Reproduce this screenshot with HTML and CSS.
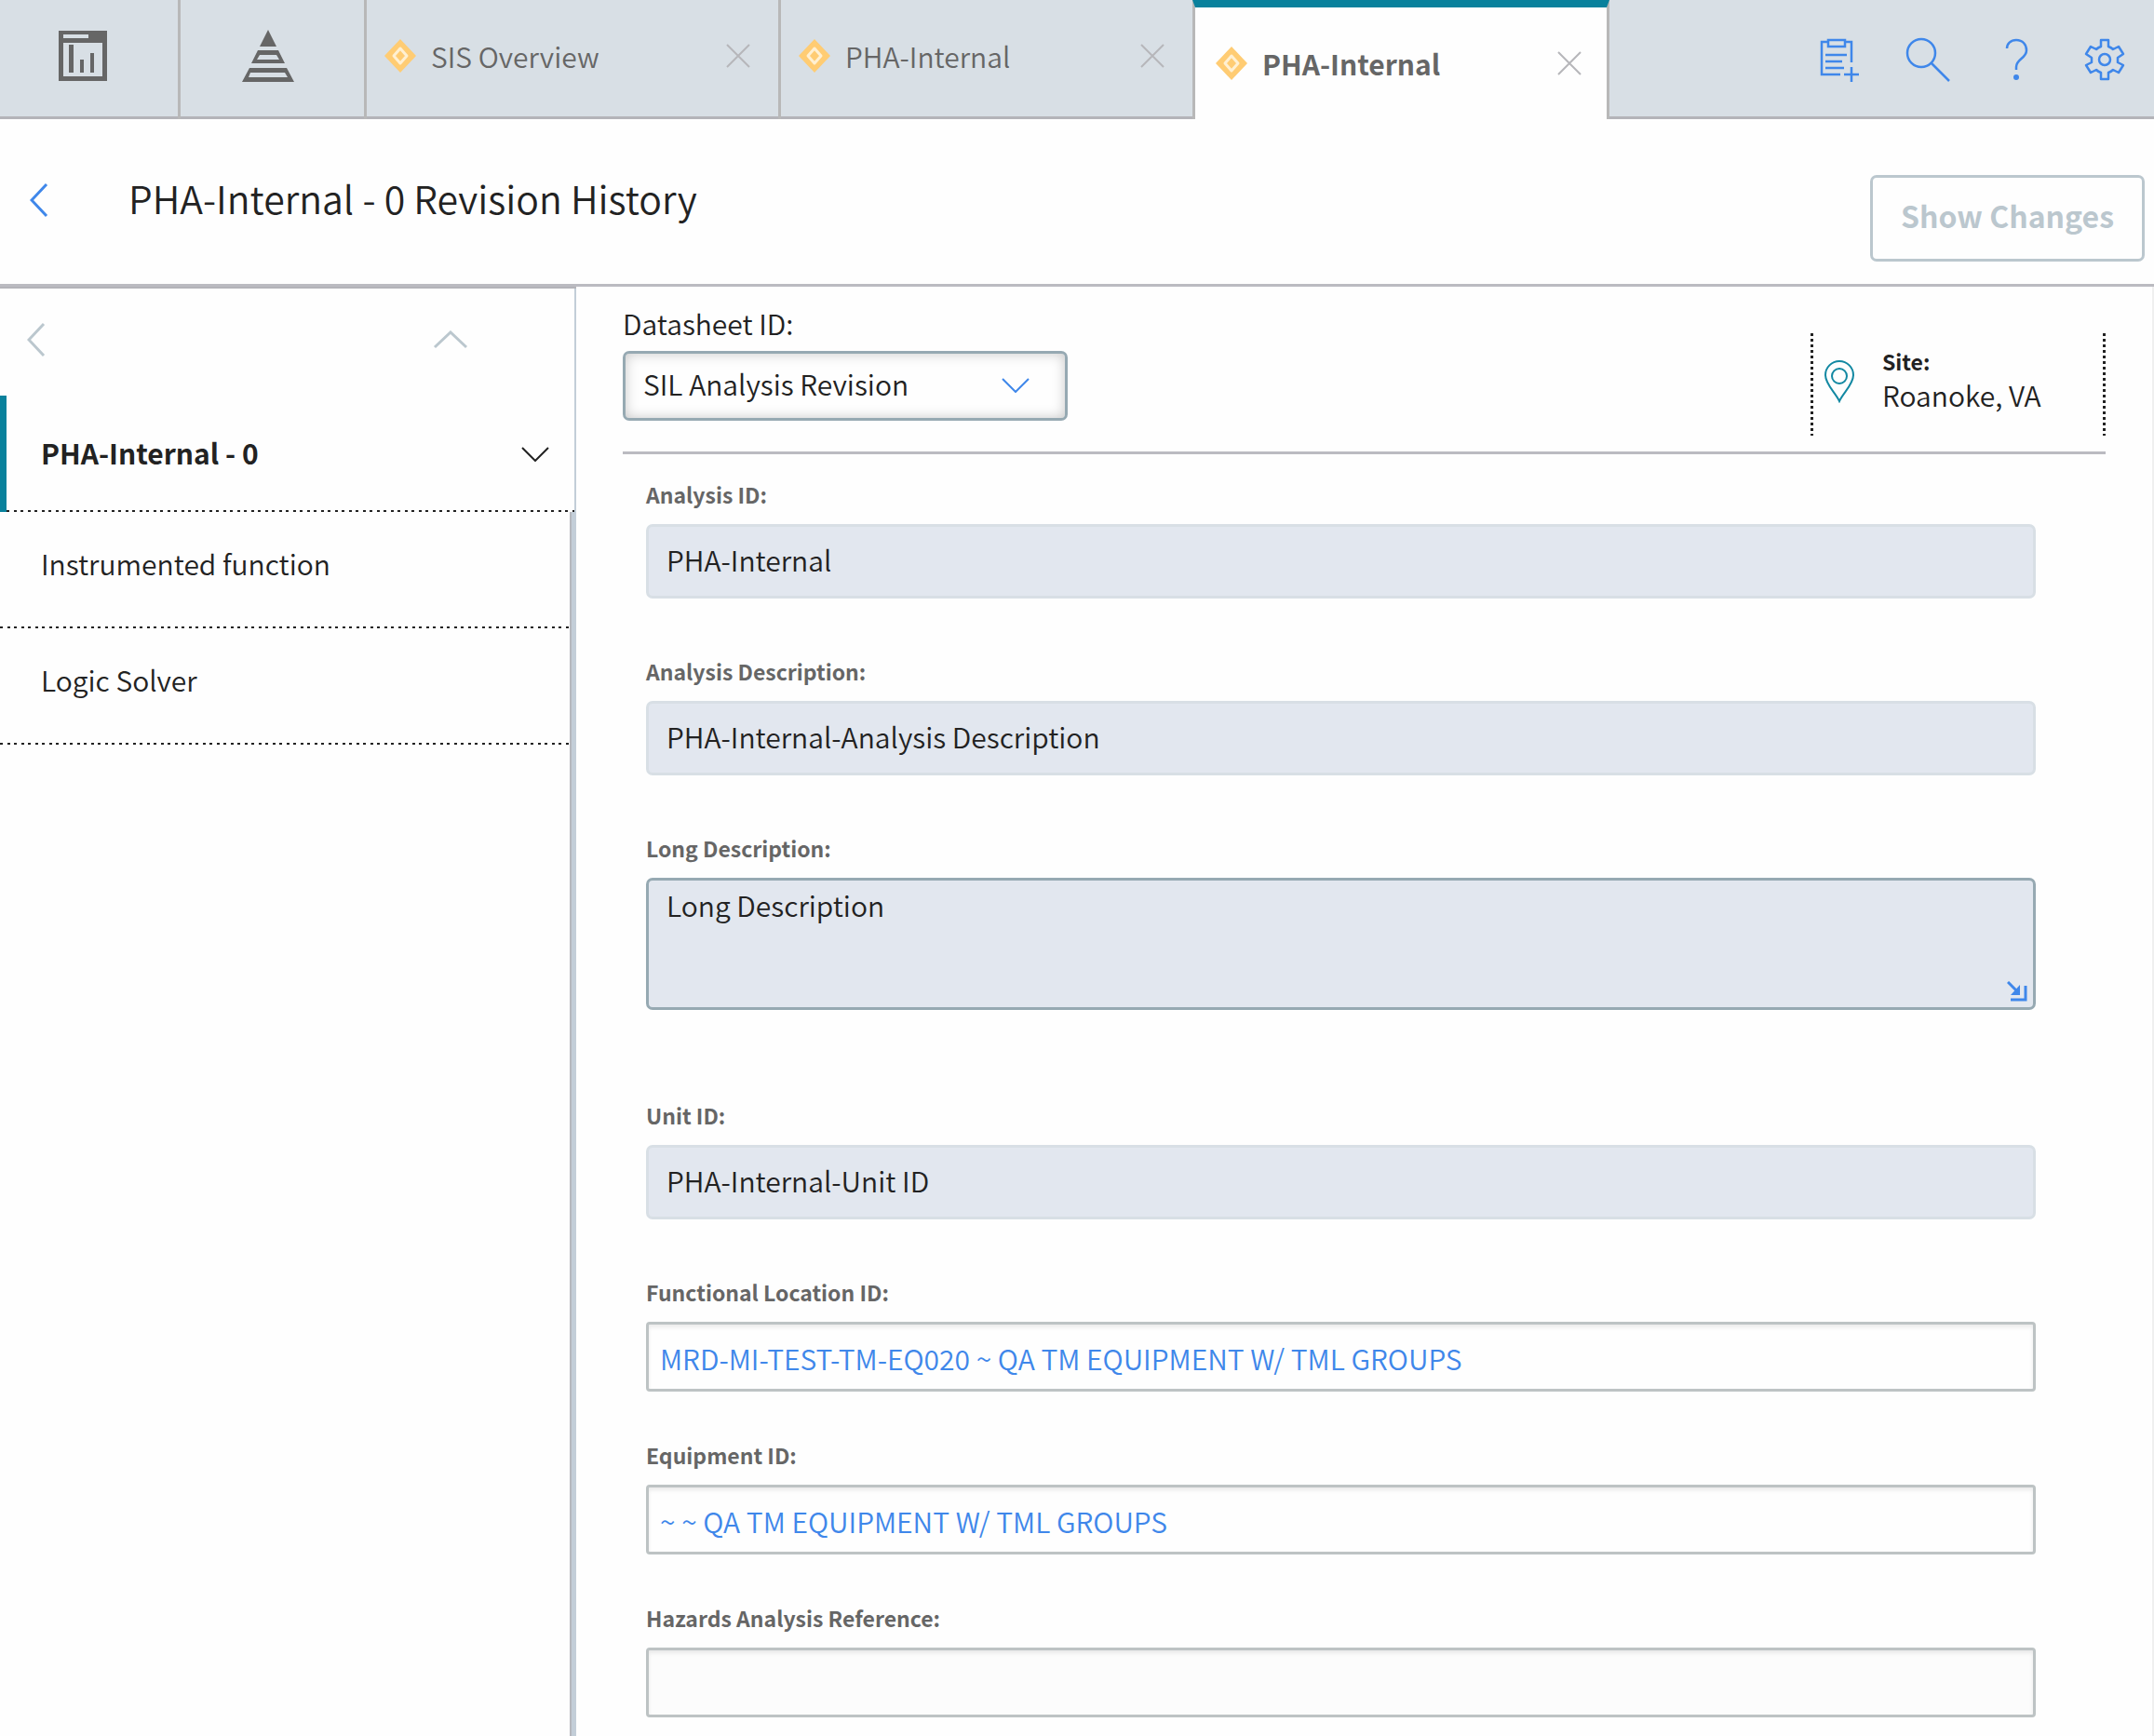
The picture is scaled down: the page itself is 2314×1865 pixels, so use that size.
FILE: index.html
```html
<!DOCTYPE html>
<html lang="en">
<head>
    <meta charset="UTF-8" />
    <meta name="viewport" content="width=device-width, initial-scale=1.0" />
    <title>PHA-Internal - 0 Revision History</title>
    <link rel="stylesheet" href="styles.css">
</head>
<body>
    <header class="topbar">
        <button class="nav-icon" aria-label="Dashboard">
            <svg width="52" height="54" viewBox="0 0 52 54">
                <path fill="#666" fill-rule="evenodd" d="M0 0H52V54H0ZM5 4V8H32V4ZM5 13V49H47V13Z" />
                <path fill="#666" d="M11 15h5v30h-5zM23 31h4v14h-4zM34 24h4v21h-4z" />
            </svg>
        </button>
        <button class="nav-icon nav-icon-wide" aria-label="Hierarchy">
            <svg width="56" height="56" viewBox="0 0 56 56">
                <path fill="#666" fill-rule="evenodd" d="M28 0L37 18H19ZM17 22H39L46 36H10ZM19 27L16 32H40L37 27ZM8 41H48L56 56H0ZM9 46L7 51H49L46 46Z" />
            </svg>
        </button>

        <div class="tab">
            <svg class="tab-mark" width="34" height="36" viewBox="0 0 34 36">
                <path fill="#ffcc73" d="M17 0L34 18L17 36L0 18Z" />
                <path fill="none" stroke="#fff0d2" stroke-width="3" stroke-linejoin="round" d="M17 10L24 18L17 26L10 18Z" />
            </svg>
            <a href="#" class="tab-name">SIS Overview</a>
            <button class="tab-close" aria-label="Close SIS Overview">
                <svg width="26" height="26" viewBox="0 0 26 26"><path d="M1 1L25 25M25 1L1 25" /></svg>
            </button>
        </div>
        <div class="tab">
            <svg class="tab-mark" width="34" height="36" viewBox="0 0 34 36">
                <path fill="#ffcc73" d="M17 0L34 18L17 36L0 18Z" />
                <path fill="none" stroke="#fff0d2" stroke-width="3" stroke-linejoin="round" d="M17 10L24 18L17 26L10 18Z" />
            </svg>
            <a href="#" class="tab-name">PHA-Internal</a>
            <button class="tab-close" aria-label="Close PHA-Internal">
                <svg width="26" height="26" viewBox="0 0 26 26"><path d="M1 1L25 25M25 1L1 25" /></svg>
            </button>
        </div>
        <div class="tab active">
            <svg class="tab-mark" width="34" height="36" viewBox="0 0 34 36">
                <path fill="#ffcc73" d="M17 0L34 18L17 36L0 18Z" />
                <path fill="none" stroke="#fff0d2" stroke-width="3" stroke-linejoin="round" d="M17 10L24 18L17 26L10 18Z" />
            </svg>
            <a href="#" class="tab-name">PHA-Internal</a>
            <button class="tab-close" aria-label="Close PHA-Internal">
                <svg width="26" height="26" viewBox="0 0 26 26"><path d="M1 1L25 25M25 1L1 25" /></svg>
            </button>
        </div>

        <div class="tools">
            <button aria-label="Add record">
                <svg width="48" height="48" viewBox="0 0 48 48">
                    <path d="M12 5H5V40H25M30 5H37V27M12 3H30V10H12ZM9 19H32M9 26H27M9 33H29M29 40H45M37 32V48" />
                </svg>
            </button>
            <button aria-label="Search">
                <svg width="48" height="48" viewBox="0 0 48 48">
                    <circle cx="17" cy="17" r="15" />
                    <path d="M28 28L47 47" />
                </svg>
            </button>
            <button aria-label="Help">
                <svg width="48" height="48" viewBox="0 0 48 48">
                    <path d="M14 12C14 7 18 3 24 3C31 3 35 8 35 14C35 23 24 23 24 32V35" />
                    <circle class="dot" cx="24" cy="43" r="3" />
                </svg>
            </button>
            <button aria-label="Settings">
                <svg width="48" height="48" viewBox="0 0 48 48">
                    <path stroke-linejoin="round" d="M20 3H28V10Q31 11 33 13L39 10L44 18L38 22Q38 24 38 27L44 30L39 38L33 35Q31 37 28 38V45H20V38Q17 37 15 35L9 38L4 30L10 27Q10 24 10 22L4 18L9 10L15 13Q17 11 20 10Z" />
                    <circle cx="24" cy="24" r="6" />
                </svg>
            </button>
        </div>
    </header>

    <div class="titlebar">
        <button class="back" aria-label="Back">
            <svg width="20" height="38" viewBox="0 0 20 38"><path d="M18 2L2 19L18 36" /></svg>
        </button>
        <h1>PHA-Internal - 0 Revision History</h1>
        <button class="show-changes" disabled>Show Changes</button>
    </div>

    <div class="content">
        <nav class="sidebar">
            <div class="sidebar-controls">
                <button aria-label="Previous level">
                    <svg width="20" height="38" viewBox="0 0 20 38"><path d="M18 2L2 19L18 36" /></svg>
                </button>
                <button aria-label="Collapse">
                    <svg width="38" height="20" viewBox="0 0 38 20"><path d="M2 18L19 2L36 18" /></svg>
                </button>
            </div>
            <a href="#" class="node selected">
                PHA-Internal - 0
                <svg width="30" height="16" viewBox="0 0 30 16"><path d="M1 1L15 15L29 1" /></svg>
            </a>
            <div class="children">
                <a href="#" class="node">Instrumented function</a>
                <a href="#" class="node">Logic Solver</a>
            </div>
        </nav>

        <main class="datasheet">
            <div class="datasheet-head">
                <div class="datasheet-pick">
                    <label for="datasheetId">Datasheet ID:</label>
                    <div class="select-wrap">
                        <select id="datasheetId">
                            <option>SIL Analysis Revision</option>
                        </select>
                        <svg width="30" height="16" viewBox="0 0 30 16"><path d="M1 1L15 15L29 1" /></svg>
                    </div>
                </div>
                <div class="site">
                    <svg width="34" height="46" viewBox="0 0 34 46">
                        <path d="M17 44C13 35 2 26 2 16A15 15 0 0 1 32 16C32 26 21 35 17 44Z" />
                        <circle cx="17" cy="17" r="8" />
                    </svg>
                    <div>
                        <strong>Site:</strong>
                        <span>Roanoke, VA</span>
                    </div>
                </div>
            </div>

            <form class="fields">
                <div class="field">
                    <label for="analysisId">Analysis ID:</label>
                    <input type="text" id="analysisId" value="PHA-Internal" readonly />
                </div>
                <div class="field">
                    <label for="analysisDesc">Analysis Description:</label>
                    <input type="text" id="analysisDesc" value="PHA-Internal-Analysis Description" readonly />
                </div>
                <div class="field field-long">
                    <label for="longDesc">Long Description:</label>
                    <div class="textarea-wrap">
                        <textarea id="longDesc" readonly>Long Description</textarea>
                        <button type="button" class="expand" aria-label="Expand">
                            <svg width="22" height="22" viewBox="0 0 22 22">
                                <path class="line" d="M1 1L10 10M20 5V20H4" />
                                <path class="head" d="M14 4V15H4Z" />
                            </svg>
                        </button>
                    </div>
                </div>
                <div class="field">
                    <label for="unitId">Unit ID:</label>
                    <input type="text" id="unitId" value="PHA-Internal-Unit ID" readonly />
                </div>
                <div class="field field-link">
                    <label id="functionalLocationLabel">Functional Location ID:</label>
                    <div class="link-box"><a href="#" aria-describedby="functionalLocationLabel">MRD-MI-TEST-TM-EQ020 ~ QA TM EQUIPMENT W/ TML GROUPS</a></div>
                </div>
                <div class="field field-link">
                    <label id="equipmentLabel">Equipment ID:</label>
                    <div class="link-box"><a href="#" aria-describedby="equipmentLabel">~ ~ QA TM EQUIPMENT W/ TML GROUPS</a></div>
                </div>
                <div class="field field-link">
                    <label for="hazards">Hazards Analysis Reference:</label>
                    <input type="text" id="hazards" class="empty" readonly />
                </div>
            </form>
        </main>
    </div>
</body>
</html>
```
FILE: styles.css
```css
:root {
    --teal: #09819c;
    --blue: #3f87ea;
    --text: #222;
    --gray-text: #666;
    --line: #bbbbc1;
    --line-dark: #b4b4b9;
    --bar: #d8dfe5;
    --disabled: #bbc7ce;
    --input-border: #96a9b2;
}

* {
    box-sizing: border-box;
}

body {
    margin: 0;
    min-height: 100vh;
    display: flex;
    flex-direction: column;
    font-family: "Noto Sans CJK SC", "Open Sans", sans-serif;
    font-size: 30px;
    font-weight: 350;
    line-height: 40px;
    color: var(--text);
    background: #fefefe;
}

button {
    padding: 0;
    border: none;
    background: none;
    font: inherit;
    cursor: pointer;
}

a {
    color: inherit;
    text-decoration: none;
}

svg {
    display: block;
    fill: none;
    flex: none;
}

/* top bar */
.topbar {
    display: flex;
    height: 128px;
    background: var(--bar);
    box-shadow: inset 0 -3px var(--line-dark);
}

.nav-icon {
    width: 194px;
    padding: 0 13px 8px 0;
    border-right: 3px solid #b8b8b8;
    display: flex;
    align-items: center;
    justify-content: center;
}

.nav-icon-wide {
    width: 200px;
    padding-right: 10px;
}

.tab {
    width: 445px;
    padding: 0 30px 8px 19px;
    border-right: 3px solid #b8b8b8;
    display: flex;
    align-items: center;
    color: var(--gray-text);
}

.tab.active {
    width: 448px;
    margin-left: -3px;
    padding: 0 27px 0 22px;
    border: 3px solid #b8b8b8;
    border-top: 8px solid var(--teal);
    border-bottom: none;
    background: #fefefe;
    font-weight: bold;
}

.tab-name {
    flex: 1;
    margin-left: 16px;
}

.tab-close svg {
    stroke: #b6b6ba;
    stroke-width: 2;
}

.tools {
    margin-left: auto;
    padding-right: 29px;
    display: flex;
    align-items: center;
    gap: 47px;
}

.tools svg {
    stroke: var(--blue);
    stroke-width: 2.5;
}

.tools .dot {
    fill: var(--blue);
    stroke: none;
}

/* title bar */
.titlebar {
    height: 180px;
    padding: 0 10px 0 32px;
    border-bottom: 3px solid var(--line);
    display: flex;
    align-items: flex-start;
}

.back {
    margin-top: 68px;
}

.back svg {
    stroke: var(--blue);
    stroke-width: 3;
}

h1 {
    flex: 1;
    margin: 56px 0 0 86px;
    font-size: 41px;
    font-weight: inherit;
    line-height: 56px;
}

.show-changes {
    margin-top: 60px;
    height: 93px;
    padding: 0 30px 8px;
    border: 3px solid var(--disabled);
    border-radius: 7px;
    color: var(--disabled);
    font-size: 32px;
    font-weight: bold;
}

.content {
    flex: 1;
    display: flex;
}

/* sidebar */
.sidebar {
    width: 619px;
    border-top: 2px solid var(--line-dark);
    display: flex;
    flex-direction: column;
}

.sidebar-controls {
    height: 115px;
    padding: 36px 114px 0 29px;
    border-right: 2px solid #c3ced8;
    display: flex;
    justify-content: space-between;
    align-items: flex-start;
}

.sidebar-controls button {
    height: 38px;
    display: flex;
    align-items: center;
}

.sidebar-controls svg {
    stroke: var(--disabled);
    stroke-width: 3;
}

.node {
    height: 125px;
    padding: 0 27px 15px 44px;
    display: flex;
    align-items: center;
    justify-content: space-between;
    /* square dots along the bottom edge */
    background: repeating-linear-gradient(to right, var(--text) 0 3px, transparent 3px 8px, var(--text) 8px 11px, transparent 11px 15px) left bottom / 100% 2px no-repeat;
}

.node.selected {
    padding-left: 37px;
    padding-bottom: 3px;
    border-left: 7px solid var(--teal);
    border-right: 2px solid #c3ced8;
    font-weight: bold;
}

.node svg {
    margin-top: 4px;
    stroke: var(--text);
    stroke-width: 2;
}

.children {
    flex: 1;
    border-right: 5px solid #c3ced8;
    box-shadow: inset -2px 0 #b6b8be;
}

/* datasheet */
.datasheet {
    flex: 1;
    padding: 0 50px 20px;
    border-right: 2px solid #efefef;
}

.datasheet-head {
    height: 180px;
    border-bottom: 3px solid var(--line);
    display: flex;
    justify-content: space-between;
    align-items: flex-start;
}

.datasheet-pick label {
    display: block;
    margin: 19px 0 10px;
}

.select-wrap {
    position: relative;
    width: 478px;
}

select {
    display: block;
    width: 100%;
    height: 75px;
    padding: 0 60px 6px 19px;
    appearance: none;
    border: 3px solid var(--input-border);
    border-radius: 7px;
    background: #fefefe;
    box-shadow: inset 0 0 14px rgba(0, 0, 0, 0.22);
    color: var(--text);
    font: inherit;
}

.select-wrap svg {
    position: absolute;
    right: 41px;
    top: 29px;
    stroke: var(--blue);
    stroke-width: 2;
    pointer-events: none;
}

.site {
    width: 317px;
    height: 110px;
    margin-top: 50px;
    padding: 14px 3px 0 14px;
    display: flex;
    gap: 29px;
    background:
        repeating-linear-gradient(var(--text) 0 3px, transparent 3px 6px) left / 3px 100% no-repeat,
        repeating-linear-gradient(var(--text) 0 3px, transparent 3px 6px) right / 3px 100% no-repeat;
}

.site svg {
    margin-top: 15px;
    stroke: #1288a2;
    stroke-width: 2;
}

.site strong,
.site span {
    display: block;
}

.site strong {
    font-size: 23px;
    line-height: 32px;
}

.fields {
    padding: 27px 75px 0 25px;
}

.field {
    margin-bottom: 62px;
}

.field-long {
    margin-bottom: 97px;
}

.field-link {
    margin-bottom: 52px;
}

.field label {
    display: block;
    margin-bottom: 16px;
    font-size: 23px;
    font-weight: bold;
    line-height: 32px;
    color: var(--gray-text);
}

.field input,
.field textarea {
    display: block;
    width: 100%;
    height: 80px;
    padding: 0 19px 5px;
    border: 3px solid #d8dfe5;
    border-radius: 7px;
    background: #e2e7ef;
    color: var(--text);
    font: inherit;
    outline: none;
}

.textarea-wrap {
    position: relative;
}

.field textarea {
    height: 142px;
    padding-top: 6px;
    border-color: var(--input-border);
    resize: none;
}

.expand {
    position: absolute;
    right: 9px;
    bottom: 9px;
}

.expand .line {
    stroke: var(--blue);
    stroke-width: 3;
}

.expand .head {
    fill: var(--blue);
}

/* fields whose value is a link to another record */
.field-link .link-box,
.field-link .empty {
    height: 75px;
    padding: 2px 12px 0;
    border: 3px solid #bdc3c4;
    border-radius: 4px;
    background: #fefefe;
    box-shadow: inset 0 3px 4px rgba(0, 0, 0, 0.08);
}

.field-link .link-box {
    display: flex;
    align-items: center;
    color: var(--blue);
}

.field-link .empty {
    background: #fcfcfc;
}
```
